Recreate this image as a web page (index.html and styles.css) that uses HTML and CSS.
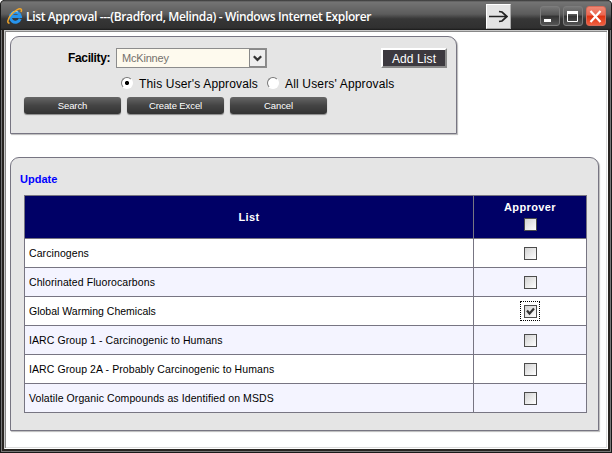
FILE: index.html
```html
<!DOCTYPE html>
<html lang="en">
<head>
<meta charset="utf-8">
<title>List Approval</title>
<link rel="stylesheet" href="styles.css">
</head>
<body>
<div class="window">
  <header class="titlebar">
    <svg class="ie" viewBox="0 0 16 16" width="16" height="16">
      <path d="M13.200 10.800A5 5 0 1 1 13.400 8.500H5" fill="none" stroke="#2794ec" stroke-width="3"/>
      <path d="M4.200 5.800A5 5 0 0 1 11 4" fill="none" stroke="#8bd3ff" stroke-width="1"/>
      <path d="M2.600 14.900C.2 15.600.1 12 3.400 7.600 7 2.900 12.700-.3 14.200 1.200c.6.700.3 1.800-.2 2.800" fill="none" stroke="#f0a62c" stroke-width="1.500"/>
    </svg>
    <h1 class="title">List Approval ---(Bradford, Melinda) - Windows Internet Explorer</h1>
    <button class="arrow" aria-label="Next"><svg width="19" height="13" viewBox="0 0 19 13"><path d="M0 6.500H17M10 1.500l3 .5 5 4.500-5 4.500-3 .5" fill="none" stroke="#222" stroke-width="1.700"/></svg></button>
    <div class="controls">
      <button class="ctl" aria-label="Minimize"><svg width="20" height="20"><path d="M4 14.500h7" stroke="#fff" stroke-width="3"/></svg></button>
      <button class="ctl" aria-label="Maximize"><svg width="20" height="20"><path d="M4.500 5v10.500h10V5M4 6h11" fill="none" stroke="#fff" stroke-width="1"/><path d="M4 6.500h11" stroke="#fff" stroke-width="3"/></svg></button>
      <button class="ctl close" aria-label="Close"><svg width="20" height="20"><path d="M4.500 5l10 11M14.500 5l-10 11" stroke="#fff" stroke-width="2.200"/></svg></button>
    </div>
  </header>
  <main class="page">
    <section class="panel search">
      <div class="line facility">
        <span class="label">Facility:</span>
        <div class="select"><span class="value">McKinney</span><span class="drop"><svg width="9" height="7" viewBox="0 0 9 7"><path d="M.8 1.200l3.700 3.700 3.700-3.700" fill="none" stroke="#333" stroke-width="2.200"/></svg></span></div>
        <button class="add"><span>Add List</span></button>
      </div>
      <div class="line radios">
        <i class="radio on"></i><span class="opt first">This User's Approvals</span>
        <i class="radio"></i><span class="opt second">All Users' Approvals</span>
      </div>
      <div class="line buttons"><button class="btn">Search</button><button class="btn">Create Excel</button><button class="btn">Cancel</button></div>
    </section>
    <section class="panel results">
      <a class="update">Update</a>
      <div class="grid">
        <div class="row head"><div class="cell">List</div><div class="cell"><span class="approver">Approver</span><i class="box"></i></div></div>
        <div class="row"><div class="cell">Carcinogens</div><div class="cell"><i class="box"></i></div></div>
        <div class="row alt"><div class="cell">Chlorinated Fluorocarbons</div><div class="cell"><i class="box"></i></div></div>
        <div class="row"><div class="cell tight">Global Warming Chemicals</div><div class="cell"><span class="focus"><i class="box"><svg width="11" height="11" viewBox="0 0 11 11"><path d="M2 4.500l2.500 3L9 2.500" fill="none" stroke="#333" stroke-width="2.200"/></svg></i></span></div></div>
        <div class="row alt"><div class="cell">IARC Group 1 - Carcinogenic to Humans</div><div class="cell"><i class="box"></i></div></div>
        <div class="row"><div class="cell">IARC Group 2A - Probably Carcinogenic to Humans</div><div class="cell"><i class="box"></i></div></div>
        <div class="row alt"><div class="cell">Volatile Organic Compounds as Identified on MSDS</div><div class="cell"><i class="box"></i></div></div>
      </div>
    </section>
  </main>
</div>
</body>
</html>
```
FILE: styles.css
```css
* { box-sizing: border-box; }
body { margin: 0; background: #fff; font-family: "Liberation Sans", Arial, sans-serif; color: #000; overflow: hidden; }
button { margin: 0; padding: 0; border: 0; font-family: inherit; }
svg { display: block; }
.window { width: 612px; height: 453px; padding: 0 4px 4px; background: #292522; border-radius: 5px 5px 0 0; box-shadow: inset 0 0 0 1px #191919, inset 0 0 0 2px #777; display: flex; flex-direction: column; }
.titlebar { height: 30px; flex: none; margin: 0 -3px; padding: 0 2px 0 6px; background: linear-gradient(#333 0, #747474 2px, #5c5c5c 14px, #363636 19px, #303030 28px, #191919 30px); border-radius: 5px 5px 0 0; display: flex; align-items: flex-start; }
.ie { margin-top: 8px; flex: none; }
.title { margin: 8px 0 0 3px; width: 460px; flex: none; font: 600 12px/18px "Open Sans", sans-serif; color: #fff; white-space: nowrap; letter-spacing: -.36px; }
.arrow { flex: none; width: 25px; height: 25px; margin-top: 4px; background: #e4e4e4; border: 1px solid; border-color: #fff #aaa #aaa #fff; display: flex; align-items: center; justify-content: center; }
.controls { display: flex; gap: 3px; margin: 6px 0 0 29px; }
.ctl { width: 20px; height: 20px; border-radius: 3px; border: 1px solid #7c7c7c; background: linear-gradient(#777, #555 45%, #333 50%, #555); }
.ctl svg { margin: -1px; }
.close { border-color: #d66a58; background: linear-gradient(#ee8874, #ec6650 45%, #dd3210 50%, #f06040); }
.page { flex: 1; background: #fff; border: 1px solid; border-color: #c8c8c8 #fff #fff #c8c8c8; box-shadow: inset 1px 1px #888, inset -1px -1px #ddd; padding: 5px; }
.panel { background: #e5e5e5; border: 1px solid #777582; border-radius: 9px 9px 0 0; box-shadow: 1px 1px 1px #bbb; }
.search { width: 447px; height: 98px; padding-top: 11px; }
.line { display: flex; align-items: center; }
.facility { height: 20px; }
.label { width: 47px; margin-left: 57px; font-size: 12px; font-weight: 700; letter-spacing: -.35px; white-space: nowrap; }
.select { width: 151px; height: 20px; margin-left: 1px; border: 1px solid #8c8c8c; background: #fefaee; display: flex; justify-content: space-between; color: #75716c; font-size: 11px; line-height: 18px; letter-spacing: -.2px; }
.value { margin-left: 5px; }
.drop { width: 17px; border: 1px solid #888; background: #eee; display: flex; align-items: center; justify-content: center; }
.add { width: 66px; height: 20px; margin-left: 114px; border: 2px solid; border-color: #fff #8a8a8a #8a8a8a #fff; background: #3c393f; color: #fff; font-size: 12px; line-height: 18px; letter-spacing: .1px; }
.radios { height: 16px; margin-top: 7px; padding-left: 110px; font-size: 12px; letter-spacing: .16px; }
.radio { width: 12px; height: 12px; flex: none; border-radius: 50%; border: 1px solid; border-color: #777 #fff #fff #777; background: #fff; }
.on { background: radial-gradient(circle, #000 0 1.600px, #fff 2.500px); }
.opt { white-space: nowrap; position: relative; top: 1px; }
.first { width: 128px; margin-left: 6px; }
.second { margin-left: 6px; }
.buttons { gap: 6px; margin-top: 6px; padding-left: 13px; }
.btn { width: 97px; height: 17px; border-radius: 3px; background: linear-gradient(#666, #444 50%, #333); box-shadow: 0 1px 1px #888; color: #fff; font-size: 9.500px; line-height: 16px; letter-spacing: -.1px; }
.results { width: 589px; height: 274px; margin-top: 23px; padding: 14px 11px 0 13px; }
.update { display: block; height: 23px; margin-left: -4px; color: #00f; font-size: 11px; font-weight: 700; line-height: 14px; }
.grid { width: 563px; background: #777582; border: 1px solid #777582; display: grid; gap: 1px; }
.row { display: grid; grid-template-columns: 448px 112px; gap: 1px; height: 28px; }
.cell { background: #fff; display: flex; align-items: center; padding-left: 4px; font-size: 10.500px; letter-spacing: .09px; white-space: nowrap; }
.tight { letter-spacing: 0; }
.cell:last-child { flex-direction: column; justify-content: center; padding: 0; }
.alt .cell { background: #f4f4ff; }
.head { height: 42px; }
.head .cell { background: #006; color: #fff; font-size: 11px; font-weight: 700; letter-spacing: .4px; padding-left: 0; justify-content: center; }
.head .cell:last-child { padding-bottom: 2px; }
.approver { line-height: 13px; margin-bottom: 4px; }
.box { display: block; width: 13px; height: 13px; border: 1px solid #4c4c4c; background: linear-gradient(135deg, #d2d2d2, #fff); }
.focus { border: 1px dotted #000; padding: 3px 2px 2px 3px; border-radius: 1px; }
```
